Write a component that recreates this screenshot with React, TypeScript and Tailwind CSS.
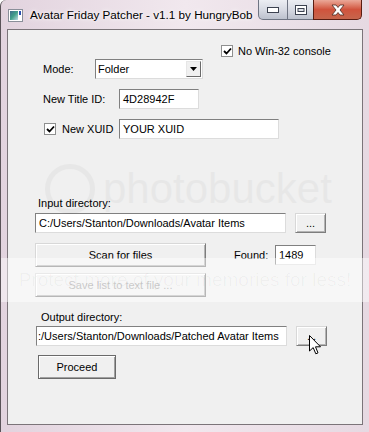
import React from "react";

const ui = "font-['Liberation_Sans',Arial,sans-serif] text-[11px] text-black";

function Check({ checked = true }: { checked?: boolean }) {
  return (
    <div className="w-[12px] h-[12px] shrink-0 bg-white border border-[#8e8f8f] flex items-center justify-center">
      {checked && (
        <svg width="9" height="9" viewBox="0 0 9 9">
          <path d="M1 4 L3.5 6.5 L8 1.5" fill="none" stroke="#000" strokeWidth="1.8" />
        </svg>
      )}
    </div>
  );
}

function TextBox({ value, className = "" }: { value: string; className?: string }) {
  return (
    <div
      className={`h-[20px] shrink-0 bg-white border border-t-[#808080] border-l-[#808080] border-r-[#dcdcdc] border-b-[#dcdcdc] flex items-center px-[3px] overflow-hidden whitespace-nowrap ${className}`}
    >
      {value}
    </div>
  );
}

function Button({
  label,
  className = "",
  disabled = false,
  strong = false,
}: {
  label: string;
  className?: string;
  disabled?: boolean;
  strong?: boolean;
}) {
  return (
    <div
      className={`shrink-0 flex items-center justify-center bg-[#f0f0f0] border ${
        strong
          ? "border-[#6a6a6a] shadow-[inset_1px_1px_0_#fff,inset_-1px_-1px_0_#a0a0a0]"
          : "border-t-[#d8d8d8] border-l-[#d8d8d8] border-r-[#7d7d7d] border-b-[#7d7d7d] shadow-[inset_1px_1px_0_#fff,inset_-1px_-1px_0_#b4b4b4]"
      } ${disabled ? "text-[#a0a0a0]" : "text-black"} ${className}`}
    >
      {label}
    </div>
  );
}

function CaptionButtons() {
  return (
    <div className="absolute top-0 right-[7px] flex h-[20px]">
      <div className="w-[30px] h-full border border-[#6e7482] border-t-0 rounded-bl-[5px] bg-gradient-to-b from-[#eceef3] via-[#d7dae3] to-[#bcc1cd] flex items-center justify-center">
        <svg width="12" height="6" viewBox="0 0 12 6">
          <rect x="0.5" y="0.5" width="11" height="5" fill="#fff" stroke="#3c4250" />
        </svg>
      </div>
      <div className="w-[25px] h-full border-b border-[#6e7482] bg-gradient-to-b from-[#eceef3] via-[#d7dae3] to-[#bcc1cd] flex items-center justify-center">
        <svg width="12" height="10" viewBox="0 0 12 10">
          <rect x="0.5" y="0.5" width="11" height="9" fill="#fff" stroke="#3c4250" />
          <rect x="3" y="3.5" width="6" height="3" fill="#dde0e7" stroke="#3c4250" />
        </svg>
      </div>
      <div className="w-[49px] h-full border border-[#5a1d12] border-t-0 rounded-br-[5px] bg-gradient-to-b from-[#eaa898] via-[#d0533d] to-[#c6654c] flex items-center justify-center">
        <svg width="16" height="12" viewBox="0 0 16 12">
          <path
            d="M2 1 L6 1 L8 3.5 L10 1 L14 1 L10 6 L14 11 L10 11 L8 8.5 L6 11 L2 11 L6 6 Z"
            fill="#fff"
            stroke="#4a2a22"
            strokeWidth="0.8"
          />
        </svg>
      </div>
    </div>
  );
}

export default function App() {
  return (
    <div className="relative w-[369px] h-[432px] overflow-hidden bg-gradient-to-r from-[#e2d3de] via-[#f1e8ee] to-[#e6d9e2] border-l border-l-[#5a5358] rounded-tl-[6px] flex flex-col px-[6px] pb-[7px]">
      {/* title bar */}
      <div className="h-[29px] shrink-0 flex items-start pt-[6px] pl-[1px]">
        <div className="w-[15px] h-[13px] mt-[3px] border border-[#8a8f99] bg-white p-[1px] flex">
          <div className="w-[9px] h-full bg-gradient-to-br from-[#3d6b8c] via-[#3fa08a] to-[#b7d9e8]" />
          <div className="w-[2px] h-[4px] ml-[1px] bg-[#2b4fb0]" />
        </div>
        <div className="ml-[7px] font-['Liberation_Sans',Arial,sans-serif] text-[11.7px] text-black [text-shadow:0_0_6px_#fff,0_0_3px_#fff] leading-[17px] whitespace-nowrap">
          Avatar Friday Patcher - v1.1 by HungryBob
        </div>
      </div>
      <CaptionButtons />

      {/* client area */}
      <div className={`flex-1 border border-[#7b7479] bg-[#f0f0f0] flex flex-col ${ui}`}>
        <div className="mt-[15px] h-[12px] flex items-center pl-[213px] gap-[5px]">
          <Check />
          <span>No Win-32 console</span>
        </div>

        <div className="mt-[2px] h-[20px] flex items-center">
          <span className="w-[87px] pl-[35px] shrink-0">Mode:</span>
          <div className="w-[108px] h-[20px] bg-white border border-t-[#808080] border-l-[#808080] border-r-[#dcdcdc] border-b-[#dcdcdc] flex items-center pl-[2px] pr-[1px]">
            <span className="flex-1">Folder</span>
            <div className="w-[15px] h-[16px] bg-[#f0f0f0] border border-t-[#e6e6e6] border-l-[#e6e6e6] border-r-[#6a6a6a] border-b-[#6a6a6a] flex items-center justify-center">
              <svg width="7" height="4" viewBox="0 0 7 4">
                <path d="M0 0 L7 0 L3.5 4 Z" fill="#000" />
              </svg>
            </div>
          </div>
        </div>

        <div className="mt-[10px] h-[20px] flex items-center">
          <span className="w-[111px] pl-[35px] shrink-0">New Title ID:</span>
          <TextBox value="4D28942F" className="w-[80px]" />
        </div>

        <div className="mt-[10px] h-[20px] flex items-center">
          <div className="w-[111px] pl-[36px] shrink-0 flex items-center gap-[6px]">
            <Check />
            <span>New XUID</span>
          </div>
          <TextBox value="YOUR XUID" className="w-[160px]" />
        </div>

        <div className="mt-[58px] h-[13px] flex items-center pl-[30px]">Input directory:</div>

        <div className="mt-[3px] h-[20px] flex items-center pl-[27px]">
          <TextBox value="C:/Users/Stanton/Downloads/Avatar Items" className="w-[251px]" />
          <Button label="..." className="ml-[9px] w-[31px] h-[20px]" />
        </div>

        <div className="mt-[10px] h-[24px] flex items-center pl-[27px]">
          <Button label="Scan for files" className="w-[171px] h-[24px]" />
          <span className="ml-[28px] w-[41px]">Found:</span>
          <TextBox value="1489" className="w-[41px] h-[19px]" />
        </div>

        <div className="mt-[6px] h-[24px] flex items-center pl-[27px]">
          <Button label="Save list to text file ..." disabled className="w-[171px] h-[24px]" />
        </div>

        <div className="mt-[14px] h-[13px] flex items-center pl-[33px]">Output directory:</div>

        <div className="mt-[2px] h-[20px] flex items-center pl-[28px]">
          <TextBox value=":/Users/Stanton/Downloads/Patched Avatar Items" className="w-[251px] !pl-[1px]" />
          <Button label="..." className="ml-[9px] w-[31px] h-[20px]" />
        </div>

        <div className="mt-[9px] h-[24px] flex items-center pl-[30px]">
          <Button label="Proceed" strong className="w-[78px] h-[24px]" />
        </div>
      </div>

      {/* photobucket watermark */}
      <div className="pointer-events-none absolute left-[44px] top-[164px] flex items-center gap-[8px] opacity-[0.03]">
        <div className="w-[50px] h-[50px] rounded-full border-[5px] border-black" />
        <span className="font-['Liberation_Sans',Arial,sans-serif] text-[42px] leading-none text-black">photobucket</span>
      </div>
      <div className="pointer-events-none absolute left-0 right-0 top-[258px] h-[44px] bg-white/45 flex items-center justify-center">
        <span className="font-['Liberation_Sans',Arial,sans-serif] text-[19px] text-black/[0.035] whitespace-nowrap">
          Protect more of your memories for less!
        </span>
      </div>

      {/* mouse pointer */}
      <svg className="pointer-events-none absolute left-[308px] top-[335px]" width="13" height="20" viewBox="0 0 13 20">
        <path d="M0.5 0.5 L0.5 16 L4.2 12.6 L6.8 18.8 L9 17.9 L6.5 11.8 L11.5 11.8 Z" fill="#fff" stroke="#000" strokeWidth="1" strokeLinejoin="round" />
      </svg>
    </div>
  );
}
